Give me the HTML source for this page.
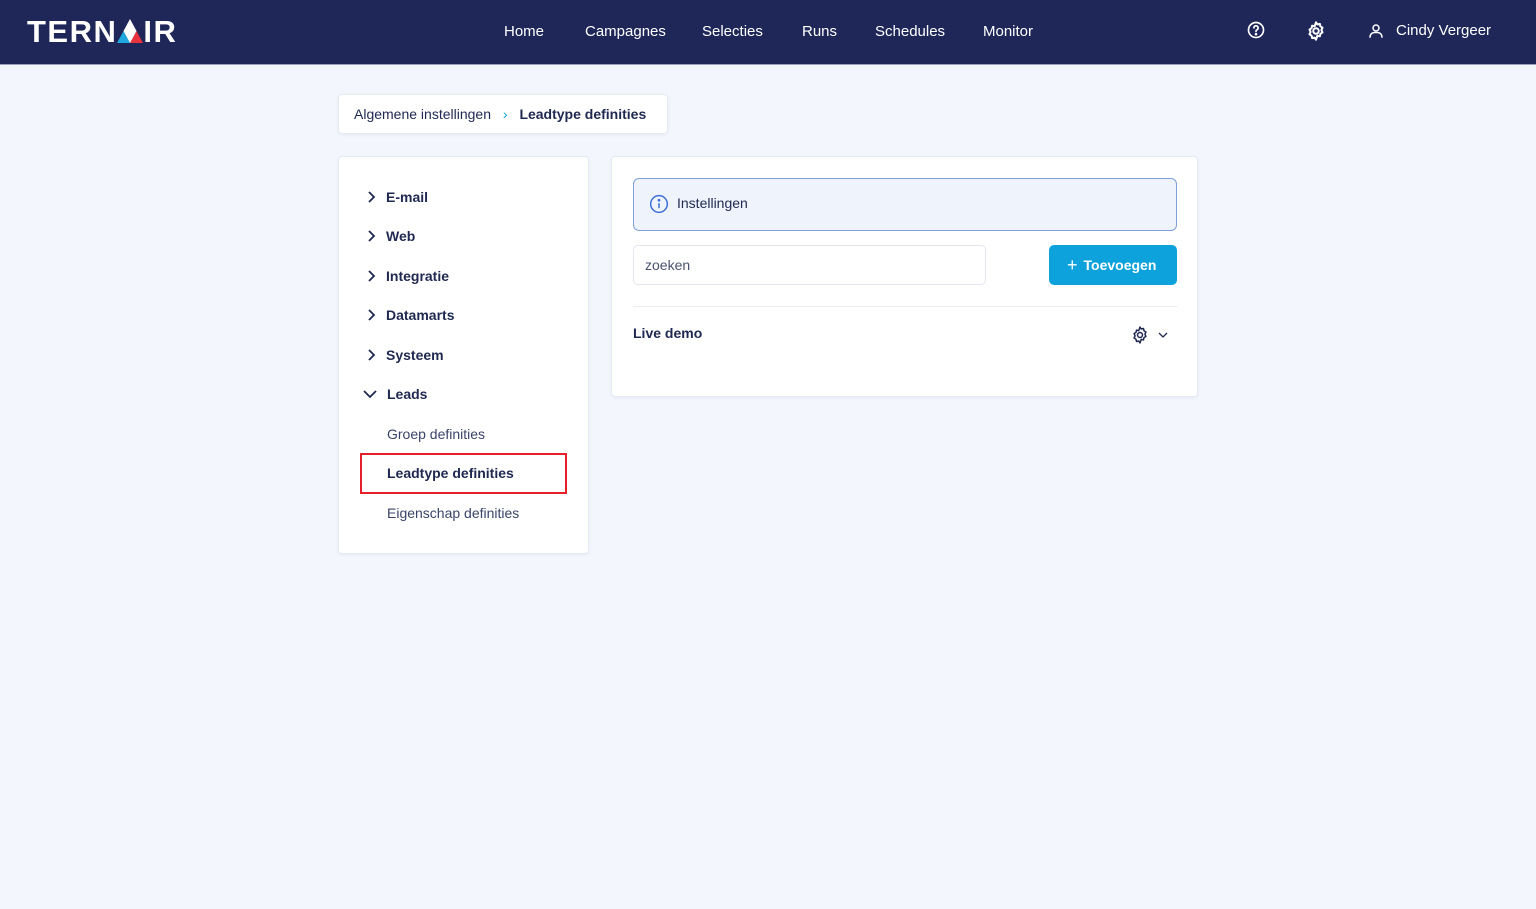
<!DOCTYPE html>
<html><head><meta charset="utf-8"><style>
*{box-sizing:border-box;margin:0;padding:0}
body{width:1536px;height:909px;background:#f3f6fd;font-family:"Liberation Sans",sans-serif;color:#1f2850;position:relative;overflow:hidden}
.hdr{position:absolute;left:0;top:0;width:1536px;height:65px;background:#1f2759;border-bottom:1px solid #9aa0bd}
.logo{position:absolute;left:27px;top:14px;color:#fff;font-weight:bold;font-size:31px;letter-spacing:1.5px}
.nav a{position:absolute;top:23px;color:#fff;font-size:15px;text-decoration:none}
.ic{position:absolute;top:20px}
.user{position:absolute;left:1396px;top:22px;color:#fff;font-size:15px}
.card{position:absolute;background:#fff;border:1px solid #e6eaf3;border-radius:4px;box-shadow:0 1px 3px rgba(30,40,80,.06)}
.bc{left:338px;top:94px;width:330px;height:40px;font-size:14px;padding:11px 15px;white-space:nowrap}
.side{left:338px;top:156px;width:251px;height:398px}
.it{position:absolute;left:27px;font-size:14px;font-weight:bold;display:flex;align-items:center}
.it svg{margin-right:10px}
.sub{position:absolute;left:48px;font-size:14px;color:#3a4468}
.main{left:611px;top:156px;width:587px;height:241px}
.info{position:absolute;left:21px;top:21px;width:544px;height:53px;background:#eef3fc;border:1px solid #7f9fdb;border-radius:6px;font-size:14px;padding:16px 0 0 43px}
.inp{position:absolute;left:21px;top:88px;width:353px;height:40px;border:1px solid #e3e6ee;border-radius:5px;font-size:14px;color:#4a5270;padding:11px 11px}
.btn{position:absolute;left:437px;top:88px;width:128px;height:40px;background:#0ea2dc;border-radius:5px;color:#fff;font-size:14px;font-weight:bold;padding:10px 0 0 18px}
.hr{position:absolute;left:21px;top:149px;width:544px;height:1px;background:#e9ecf2}
</style></head><body>
<div class="hdr">
<div class="logo">TERN<span style="display:inline-block;width:26px;position:relative;height:24px;vertical-align:-1px"><svg width="26" height="24" viewBox="0 0 26 24" style="position:absolute;left:0;top:0"><polygon points="13,0 19.5,12 6.5,12" fill="#fff"/><polygon points="6.5,12 13,24 0,24" fill="#1fa7e0"/><polygon points="19.5,12 26,24 13,24" fill="#e8323e"/><polygon points="6.5,12 19.5,12 13,24" fill="#fff"/></svg></span>IR</div>
<div class="nav"><a style="left:504px">Home</a><a style="left:585px">Campagnes</a><a style="left:702px">Selecties</a><a style="left:802px">Runs</a><a style="left:875px">Schedules</a><a style="left:983px">Monitor</a></div>
<svg class="ic" style="left:1246px" width="20" height="20" viewBox="0 0 24 24" fill="none" stroke="#fff" stroke-width="2"><circle cx="12" cy="12" r="9"/><path d="M9.5 9.5a2.5 2.5 0 1 1 3.5 2.3c-.7.3-1 .8-1 1.5v.5" stroke-linecap="round"/><circle cx="12" cy="17" r=".6" fill="#fff"/></svg>
<svg class="ic" style="left:1305px" width="22" height="22" viewBox="0 0 24 24" fill="none" stroke="#fff" stroke-width="2.2"><circle cx="12" cy="12" r="3"/><path d="M12 2.5l1.5 2.3 2.7-.6.6 2.7 2.3 1.5-1.2 2.6 1.2 2.6-2.3 1.5-.6 2.7-2.7-.6L12 21.5l-1.5-2.3-2.7.6-.6-2.7-2.3-1.5L6.1 13 4.9 10.4l2.3-1.5.6-2.7 2.7.6z" stroke-linejoin="round"/></svg>
<svg class="ic" style="left:1367px;top:21px" width="18" height="20" viewBox="0 0 24 24" fill="none" stroke="#fff" stroke-width="2"><circle cx="12" cy="8" r="4"/><path d="M4 21v-1a6 6 0 0 1 6-6h4a6 6 0 0 1 6 6v1"/></svg>
<div class="user">Cindy Vergeer</div>
</div>
<div class="card bc">Algemene instellingen <span style="color:#0ea2dc;margin:0 8px">›</span> <b>Leadtype definities</b></div>
<div class="card side">
<div class="it" style="top:32px"><svg width="10" height="12" viewBox="0 0 10 12"><path d="M3 1l5 5-5 5" fill="none" stroke="#1f2850" stroke-width="1.8"/></svg>E-mail</div>
<div class="it" style="top:71px"><svg width="10" height="12" viewBox="0 0 10 12"><path d="M3 1l5 5-5 5" fill="none" stroke="#1f2850" stroke-width="1.8"/></svg>Web</div>
<div class="it" style="top:111px"><svg width="10" height="12" viewBox="0 0 10 12"><path d="M3 1l5 5-5 5" fill="none" stroke="#1f2850" stroke-width="1.8"/></svg>Integratie</div>
<div class="it" style="top:150px"><svg width="10" height="12" viewBox="0 0 10 12"><path d="M3 1l5 5-5 5" fill="none" stroke="#1f2850" stroke-width="1.8"/></svg>Datamarts</div>
<div class="it" style="top:190px"><svg width="10" height="12" viewBox="0 0 10 12"><path d="M3 1l5 5-5 5" fill="none" stroke="#1f2850" stroke-width="1.8"/></svg>Systeem</div>
<div class="it" style="top:229px;left:24px"><svg width="14" height="12" viewBox="0 0 14 12"><path d="M1 3l6 6 6-6" fill="none" stroke="#1f2850" stroke-width="1.8"/></svg>Leads</div>
<div class="sub" style="top:269px">Groep definities</div>
<div style="position:absolute;left:21px;top:296px;width:207px;height:41px;border:2px solid #e5202a"></div>
<div class="sub" style="top:308px;font-weight:bold;color:#1f2850">Leadtype definities</div>
<div class="sub" style="top:348px">Eigenschap definities</div>
</div>
<div class="card main">
<div class="info"><svg style="position:absolute;left:15px;top:15px" width="20" height="20" viewBox="0 0 24 24" fill="none" stroke="#3f6fd8" stroke-width="1.8"><circle cx="12" cy="12" r="10"/><path d="M12 11v6"/><circle cx="12" cy="7.5" r=".8" fill="#3f6fd8"/></svg>Instellingen</div>
<div class="inp">zoeken</div>
<div class="btn"><span style="font-weight:normal;font-size:18px;margin-right:6px;vertical-align:-1px">+</span>Toevoegen</div>
<div class="hr"></div>
<div style="position:absolute;left:21px;top:168px;font-size:14px;font-weight:bold">Live demo</div>
<svg style="position:absolute;left:518px;top:168px" width="20" height="20" viewBox="0 0 24 24" fill="none" stroke="#1f2850" stroke-width="1.8"><circle cx="12" cy="12" r="3"/><path d="M12 2.5l1.5 2.3 2.7-.6.6 2.7 2.3 1.5-1.2 2.6 1.2 2.6-2.3 1.5-.6 2.7-2.7-.6L12 21.5l-1.5-2.3-2.7.6-.6-2.7-2.3-1.5L6.1 13 4.9 10.4l2.3-1.5.6-2.7 2.7.6z" stroke-linejoin="round"/></svg>
<svg style="position:absolute;left:546px;top:174px" width="10" height="8" viewBox="0 0 10 8"><path d="M1 2l4 4 4-4" fill="none" stroke="#1f2850" stroke-width="1.3"/></svg>
</div>
</body></html>
